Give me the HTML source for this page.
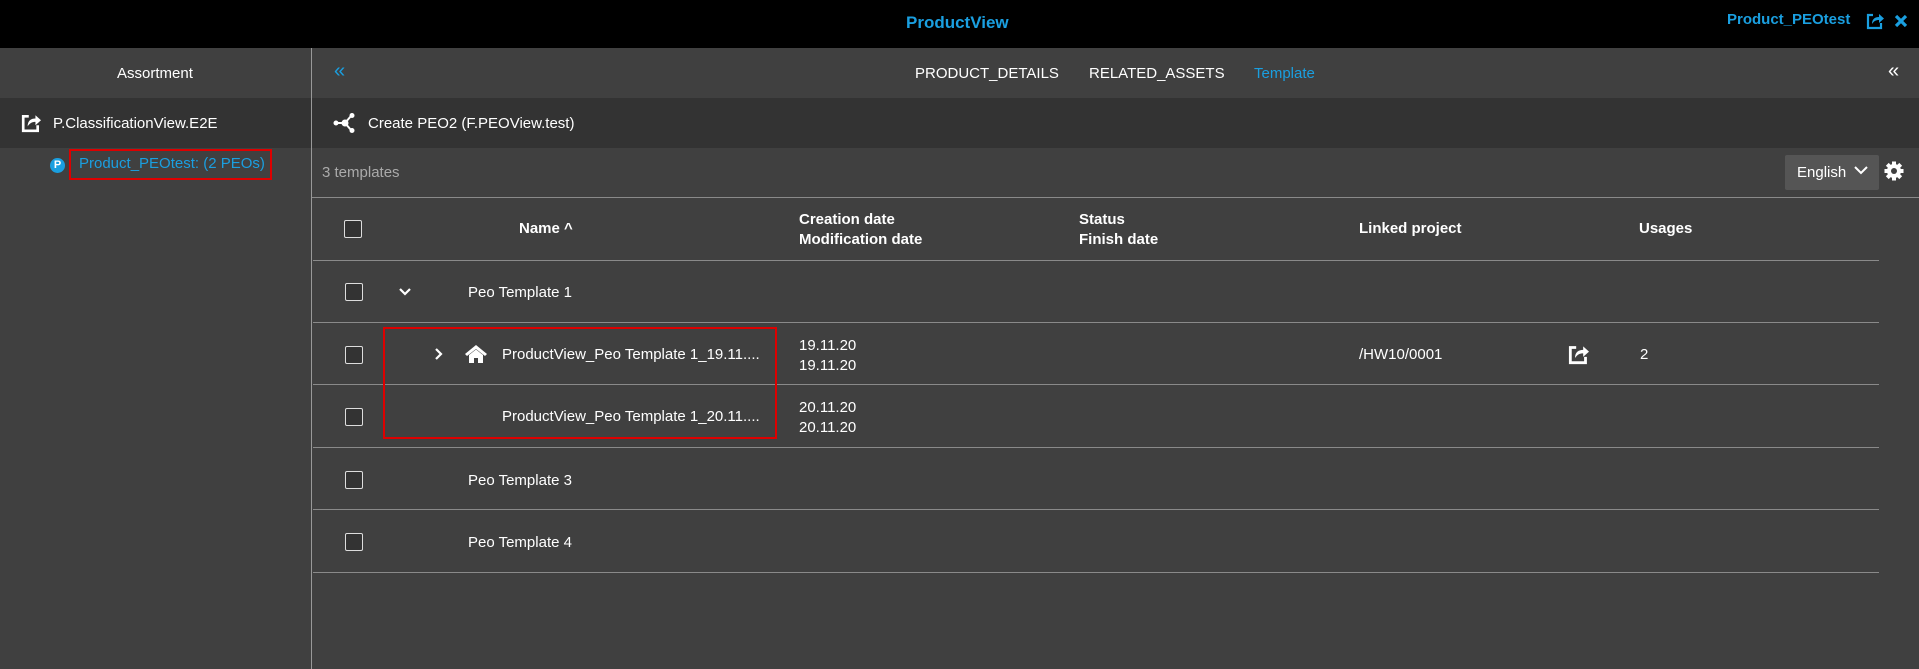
<!DOCTYPE html><html><head><style>
*{margin:0;padding:0;box-sizing:border-box}
body{width:1919px;height:669px;overflow:hidden;background:#404040;font-family:"Liberation Sans",Arial,sans-serif;color:#fff;position:relative;font-size:15px}
.a{position:absolute}
.cb{position:absolute;width:18px;height:18px;border:1.5px solid #ddd;border-radius:2px;background:#333}
.hl{position:absolute;left:313px;right:40px;height:1px;background:#8a8a8a}
.t{position:absolute;white-space:nowrap}
.b{font-weight:bold}
</style></head><body>
<div class="a" style="left:0;top:0;width:1919px;height:48px;background:#000"></div>
<div class="t b" style="left:906px;top:13px;font-size:17px;color:#1a9fe0">ProductView</div>
<div class="t b" style="left:1727px;top:11px;font-size:15px;color:#1a9fe0">Product_PEOtest</div>
<svg class="a" style="left:1866px;top:12px" width="18" height="18" viewBox="0 0 18 18"><path d="M7 3H2v13h13v-5" fill="none" stroke="#1a9fe0" stroke-width="2.2"/><path d="M6 12c0-5 3-7 7-7V2l5 4.5-5 4.5V8c-3 0-5 1-7 4z" fill="#1a9fe0"/></svg>
<svg class="a" style="left:1894px;top:14px" width="14" height="14" viewBox="0 0 14 14"><path d="M2 2l10 10M12 2L2 12" stroke="#1a9fe0" stroke-width="3.2"/></svg>
<!-- sidebar -->
<div class="a" style="left:0;top:98px;width:312px;height:50px;background:#333"></div>
<div class="t" style="left:117px;top:65px;font-size:15px">Assortment</div>
<svg class="a" style="left:20px;top:113px" width="22" height="20" viewBox="0 0 18 18"><path d="M7 3H2v13h13v-5" fill="none" stroke="#fff" stroke-width="2.4"/><path d="M6 12c0-5 3-7 7-7V2l5 4.5-5 4.5V8c-3 0-5 1-7 4z" fill="#fff"/></svg>
<div class="t" style="left:53px;top:115px;font-size:15px">P.ClassificationView.E2E</div>
<div class="a" style="left:50px;top:158px;width:15px;height:15px;border-radius:50%;background:#1a9fe0;font-size:11px;font-weight:bold;text-align:center;line-height:15px">P</div>
<div class="a" style="left:69px;top:149px;width:203px;height:31px;border:2.5px solid #d00"></div>
<div class="t" style="left:79px;top:155px;font-size:15px;color:#1a9fe0">Product_PEOtest: (2 PEOs)</div>
<div class="a" style="left:311px;top:48px;width:1px;height:621px;background:#999"></div>
<!-- main -->
<div class="a" style="left:312px;top:98px;width:1607px;height:50px;background:#333"></div>
<div class="t" style="left:334px;top:60px;font-size:20px;color:#1a9fe0">«</div>
<div class="t" style="left:915px;top:65px">PRODUCT_DETAILS</div>
<div class="t" style="left:1089px;top:65px">RELATED_ASSETS</div>
<div class="t" style="left:1254px;top:65px;color:#1a9fe0">Template</div>
<div class="t" style="left:1888px;top:60px;font-size:20px">«</div>
<svg class="a" style="left:333px;top:112px" width="24" height="22" viewBox="0 0 24 22"><g stroke="#fff" stroke-width="2"><path d="M4 11h8M12 11l6-7M12 11l6 7"/></g><circle cx="3" cy="11" r="2.5" fill="#fff"/><circle cx="12" cy="11" r="3.5" fill="#fff"/><circle cx="19" cy="3.5" r="2.5" fill="#fff"/><circle cx="19" cy="18.5" r="2.5" fill="#fff"/></svg>
<div class="t" style="left:368px;top:115px">Create PEO2 (F.PEOView.test)</div>
<div class="t" style="left:322px;top:164px;color:#aaa">3 templates</div>
<div class="a" style="left:1785px;top:155px;width:94px;height:35px;background:#555;border-radius:2px"></div>
<div class="t" style="left:1797px;top:164px">English</div>
<svg class="a" style="left:1854px;top:165px" width="14" height="10" viewBox="0 0 14 10"><path d="M1 2l6 6 6-6" fill="none" stroke="#fff" stroke-width="2"/></svg>
<svg class="a" style="left:1884px;top:161px" width="20" height="20" viewBox="0 0 20 20"><g fill="#fff"><circle cx="10" cy="10" r="7"/><rect x="8" y="0.5" width="4" height="19"/><rect x="0.5" y="8" width="19" height="4"/><rect x="8" y="0.5" width="4" height="19" transform="rotate(45 10 10)"/><rect x="8" y="0.5" width="4" height="19" transform="rotate(-45 10 10)"/></g><circle cx="10" cy="10" r="3" fill="#404040"/></svg>
<div class="a" style="left:312px;top:197px;width:1607px;height:1px;background:#8a8a8a"></div>
<!-- header -->
<div class="cb" style="left:344px;top:220px"></div>
<div class="t b" style="left:519px;top:220px">Name ^</div>
<div class="t b" style="left:799px;top:210px;line-height:20px">Creation date<br>Modification date</div>
<div class="t b" style="left:1079px;top:210px;line-height:20px">Status<br>Finish date</div>
<div class="t b" style="left:1359px;top:220px">Linked project</div>
<div class="t b" style="left:1639px;top:220px">Usages</div>
<div class="hl" style="top:260px"></div>
<!-- rows -->
<div class="cb" style="left:345px;top:283px"></div>
<svg class="a" style="left:398px;top:287px" width="14" height="10" viewBox="0 0 14 10"><path d="M2 2l5 5 5-5" fill="none" stroke="#fff" stroke-width="2.2"/></svg>
<div class="t" style="left:468px;top:284px">Peo Template 1</div>
<div class="hl" style="top:322px"></div>
<div class="cb" style="left:345px;top:346px"></div>
<svg class="a" style="left:434px;top:347px" width="10" height="14" viewBox="0 0 10 14"><path d="M2 2l5 5-5 5" fill="none" stroke="#fff" stroke-width="2.2"/></svg>
<svg class="a" style="left:464px;top:344px" width="24" height="20" viewBox="0 0 24 20"><path d="M12 1L1 10l2 2 9-7 9 7 2-2z" fill="#fff"/><path d="M5 11l7-5.5 7 5.5v8h-5v-5h-4v5H5z" fill="#fff"/></svg>
<div class="t" style="left:502px;top:346px">ProductView_Peo Template 1_19.11....</div>
<div class="t" style="left:799px;top:336px;line-height:20px">19.11.20<br>19.11.20</div>
<div class="t" style="left:1359px;top:346px">/HW10/0001</div>
<svg class="a" style="left:1567px;top:344px" width="23" height="21" viewBox="0 0 18 18"><path d="M7 3H2v13h13v-5" fill="none" stroke="#fff" stroke-width="2.4"/><path d="M6 12c0-5 3-7 7-7V2l5 4.5-5 4.5V8c-3 0-5 1-7 4z" fill="#fff"/></svg>
<div class="t" style="left:1640px;top:346px">2</div>
<div class="hl" style="top:384px"></div>
<div class="cb" style="left:345px;top:408px"></div>
<div class="t" style="left:502px;top:408px">ProductView_Peo Template 1_20.11....</div>
<div class="t" style="left:799px;top:398px;line-height:20px">20.11.20<br>20.11.20</div>
<div class="a" style="left:383px;top:327px;width:394px;height:112px;border:2.5px solid #d00"></div>
<div class="hl" style="top:447px"></div>
<div class="cb" style="left:345px;top:471px"></div>
<div class="t" style="left:468px;top:472px">Peo Template 3</div>
<div class="hl" style="top:509px"></div>
<div class="cb" style="left:345px;top:533px"></div>
<div class="t" style="left:468px;top:534px">Peo Template 4</div>
<div class="hl" style="top:572px"></div>
</body></html>
